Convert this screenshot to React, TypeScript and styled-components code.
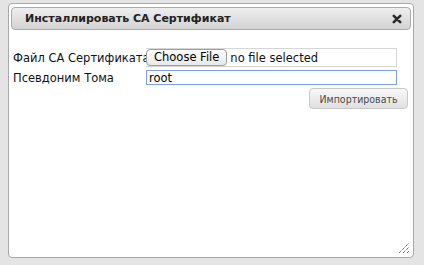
import React from "react";
import styled, { createGlobalStyle } from "styled-components";

const Global = createGlobalStyle`
  html, body { margin: 0; padding: 0; background: #e4e4e4; }
  body { font-family: "DejaVu Sans", Verdana, sans-serif; }
`;

const Page = styled.div`
  padding: 3px 0 0 8px;
  height: 262px;
  box-sizing: border-box;
`;

const Dialog = styled.div`
  position: relative;
  width: 406px;
  height: 255px;
  box-sizing: border-box;
  background: #fff;
  border: 1px solid #a9a9a9;
  border-radius: 4px;
  padding: 3px 2px;
`;

const TitleBar = styled.div`
  display: flex;
  align-items: center;
  justify-content: space-between;
  height: 23px;
  box-sizing: border-box;
  padding: 0 7px 0 13px;
  border: 1px solid #ababab;
  border-radius: 4px;
  background: linear-gradient(#eeeeee, #d3d3d3);
`;

const Title = styled.span`
  font-size: 11px;
  font-weight: bold;
  color: #222;
`;

const Close = styled.button`
  display: flex;
  align-items: center;
  justify-content: center;
  width: 12px;
  height: 12px;
  padding: 0;
  border: 0;
  background: transparent;
`;

const Form = styled.div`
  display: grid;
  grid-template-columns: 133px 251px;
  grid-auto-rows: auto;
  row-gap: 3px;
  padding: 18px 0 0 2px;
  align-items: center;
`;

const Label = styled.label`
  font-size: 11.5px;
  color: #111;
  white-space: nowrap;
  padding-top: 1px;
`;

const FileBox = styled.div`
  display: flex;
  align-items: center;
  height: 19px;
  box-sizing: border-box;
  border: 1px solid #d6d6d6;
  border-left: 0;
`;

const ChooseBtn = styled.button`
  height: 17px;
  padding: 0 7px;
  margin-top: -1px;
  box-sizing: border-box;
  border: 1px solid #9d9d9d;
  border-radius: 4px;
  background: linear-gradient(#ffffff, #e8e8e8);
  font-family: "DejaVu Sans", Verdana, sans-serif;
  font-size: 11.5px;
  color: #000;
  line-height: 15px;
`;

const FileText = styled.span`
  margin-left: 3px;
  font-size: 11.5px;
  color: #111;
`;

const TextInput = styled.input`
  height: 15px;
  box-sizing: border-box;
  width: 100%;
  margin: 0;
  padding: 0 2px;
  border: 1px solid #7c9fe9;
  outline: none;
  font-family: "DejaVu Sans", Verdana, sans-serif;
  font-size: 11.5px;
  color: #000;
`;

const Actions = styled.div`
  display: flex;
  justify-content: flex-end;
  padding: 3px 3px 0 0;
`;

const ImportBtn = styled.button`
  width: 99px;
  height: 21px;
  border: 1px solid #c8c8c8;
  border-radius: 4px;
  background: linear-gradient(#f8f8f8, #e0e0e0);
  font-family: "DejaVu Sans Condensed", "DejaVu Sans", Verdana, sans-serif;
  font-size: 10.5px;
  color: #4a4a4a;
  padding: 0;
`;

const Grip = styled.div`
  position: absolute;
  right: 3px;
  bottom: 3px;
  width: 12px;
  height: 12px;
  display: flex;
`;

export default function App() {
  return (
    <>
      <Global />
      <Page>
        <Dialog>
          <TitleBar>
            <Title>Инсталлировать CA Сертификат</Title>
            <Close aria-label="close">
              <svg width="10" height="10" viewBox="0 0 10 10">
                <path d="M1.8 1.8 L8.2 8.2 M8.2 1.8 L1.8 8.2" stroke="#2a2a2a" strokeWidth="2.6" strokeLinecap="round" />
              </svg>
            </Close>
          </TitleBar>
          <Form>
            <Label>Файл CA Сертификата</Label>
            <FileBox>
              <ChooseBtn>Choose File</ChooseBtn>
              <FileText>no file selected</FileText>
            </FileBox>
            <Label>Псевдоним Тома</Label>
            <TextInput defaultValue="root" />
          </Form>
          <Actions>
            <ImportBtn>Импортировать</ImportBtn>
          </Actions>
          <Grip>
            <svg width="12" height="12" viewBox="0 0 12 12">
              <path d="M1 11 L11 1 M5 11 L11 5 M9 11 L11 9" stroke="#333" strokeWidth="1" strokeDasharray="1 1" />
            </svg>
          </Grip>
        </Dialog>
      </Page>
    </>
  );
}
